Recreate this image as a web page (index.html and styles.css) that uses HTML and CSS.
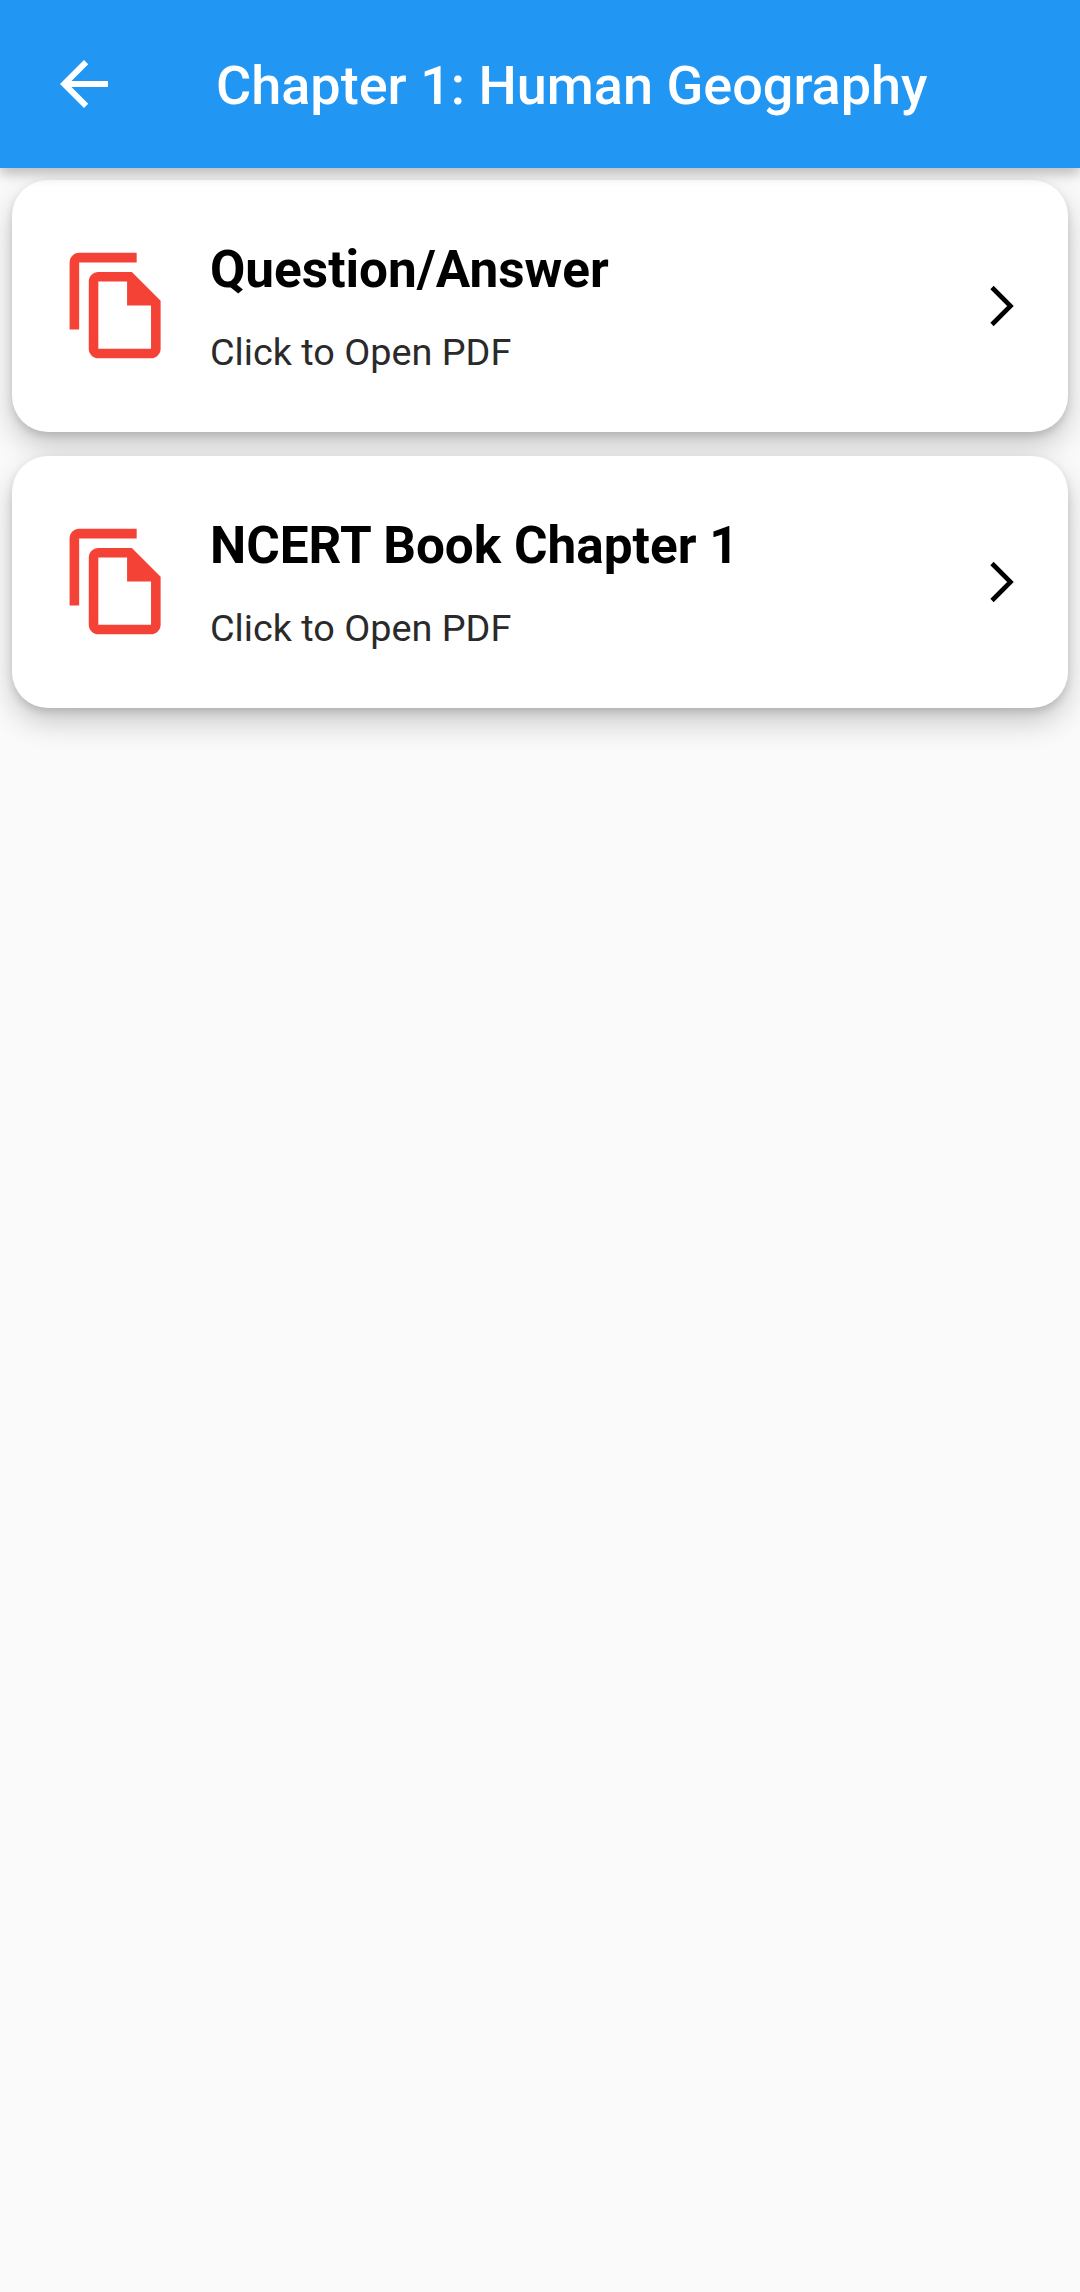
FILE: index.html
```html
<!DOCTYPE html>
<html lang="en">

<head>
  <meta charset="UTF-8">
  <meta name="viewport" content="width=device-width, initial-scale=1.0">
  <title>Chapter 1: Human Geography</title>
  <link rel="stylesheet" href="styles.css">
</head>

<body>
  <header class="app-bar">
    <svg class="back-icon" viewBox="0 0 24 24">
      <path d="M20 11H7.83l5.59-5.59L12 4l-8 8 8 8 1.41-1.41L7.83 13H20v-2z" />
    </svg>
    <h1 class="app-title">Chapter 1: Human Geography</h1>
  </header>

  <main class="list">
    <div class="card">
      <svg class="file-icon" viewBox="0 0 24 24">
        <path d="M16 1H4c-1.1 0-2 .9-2 2v14h2V3h12V1zm-1 4H8c-1.1 0-1.99.9-1.99 2L6 21c0 1.1.89 2 1.99 2H19c1.1 0 2-.9 2-2V11l-6-6zM8 21V7h6v5h5v9H8z" />
      </svg>
      <div class="card-text">
        <div class="card-title">Question/Answer</div>
        <div class="card-sub">Click to Open PDF</div>
      </div>
      <svg class="chevron" viewBox="0 0 24 42">
        <polyline points="2,2.5 20.5,21 2,39.5" />
      </svg>
    </div>

    <div class="card">
      <svg class="file-icon" viewBox="0 0 24 24">
        <path d="M16 1H4c-1.1 0-2 .9-2 2v14h2V3h12V1zm-1 4H8c-1.1 0-1.99.9-1.99 2L6 21c0 1.1.89 2 1.99 2H19c1.1 0 2-.9 2-2V11l-6-6zM8 21V7h6v5h5v9H8z" />
      </svg>
      <div class="card-text">
        <div class="card-title">NCERT Book Chapter 1</div>
        <div class="card-sub">Click to Open PDF</div>
      </div>
      <svg class="chevron" viewBox="0 0 24 42">
        <polyline points="2,2.5 20.5,21 2,39.5" />
      </svg>
    </div>
  </main>
</body>

</html>
```

FILE: styles.css
```css
* {
  box-sizing: border-box;
}

html,
body {
  margin: 0;
  height: 100%;
}

body {
  background: #fafafa;
  font-family: Roboto, sans-serif;
}

.app-bar {
  position: relative;
  z-index: 1;
  display: flex;
  align-items: center;
  height: 168px;
  padding-left: 48px;
  background: #2196f3;
  box-shadow: 0 6px 12px rgba(0, 0, 0, 0.25);
}

.back-icon {
  width: 72px;
  height: 72px;
  fill: #fff;
  flex-shrink: 0;
}

.app-title {
  margin: 3px 0 0 96px;
  font-size: 54px;
  font-weight: 500;
  line-height: 64px;
  color: #fff;
}

.list {
  display: flex;
  flex-direction: column;
  gap: 24px;
  padding: 12px;
}

.card {
  display: flex;
  align-items: center;
  height: 252px;
  padding: 0 48px;
  background: #fff;
  border-radius: 36px;
  box-shadow: 0 14px 30px rgba(0, 0, 0, 0.2), 0 4px 8px rgba(0, 0, 0, 0.14);
}

.file-icon {
  width: 115px;
  height: 115px;
  margin-top: -1px;
  fill: #f44336;
  flex-shrink: 0;
}

.card-text {
  flex: 1;
  margin-left: 35px;
  margin-top: 2px;
}

.card-title {
  font-size: 51.3px;
  font-weight: 700;
  line-height: 60px;
  color: #000;
}

.card-sub {
  margin-top: 30px;
  font-size: 37.8px;
  line-height: 44px;
  color: #2a2a2a;
}

.chevron {
  width: 24px;
  height: 42px;
  fill: none;
  stroke: #000;
  stroke-width: 4.6;
  flex-shrink: 0;
  margin-right: 6px;
}
```
